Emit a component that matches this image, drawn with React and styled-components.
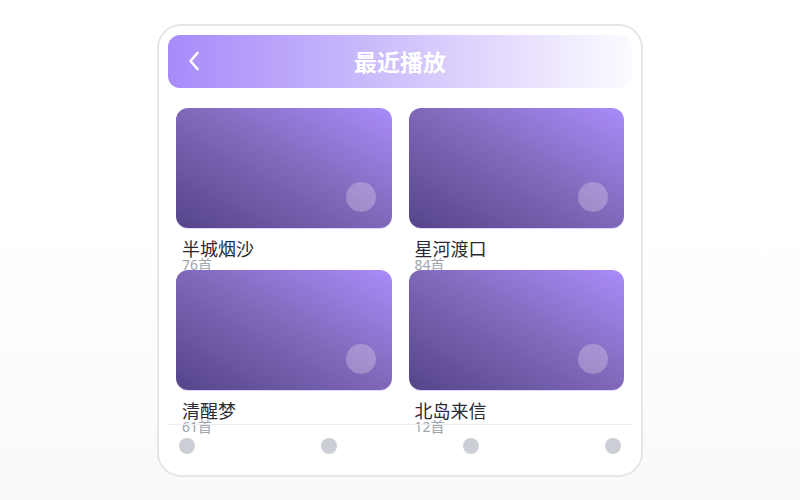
import React from "react";
import styled, { createGlobalStyle } from "styled-components";

const GlobalStyle = createGlobalStyle`
  html, body { margin: 0; padding: 0; }
  body {
    height: 500px;
    background: linear-gradient(to bottom, #ffffff 0%, #ffffff 45%, #f9f9fb 100%);
    font-family: "Noto Sans", "Noto Sans CJK SC", sans-serif;
  }
  #root { height: 100%; }
`;

const Page = styled.div`
  height: 100%;
  display: flex;
  align-items: center;
  justify-content: center;
`;

const Frame = styled.div`
  box-sizing: border-box;
  width: 486px;
  height: 453px;
  border: 2px solid #e6e6ea;
  border-radius: 24px;
  background: #ffffff;
  padding: 9px;
  display: flex;
  flex-direction: column;
`;

const Header = styled.div`
  position: relative;
  flex: 0 0 53px;
  border-radius: 12px;
  background: linear-gradient(90deg, #a78bfa 0%, #cbbcfb 45%, #e7defd 75%, #fcfbff 100%);
  display: flex;
  align-items: center;
  justify-content: center;
`;

const BackButton = styled.button`
  position: absolute;
  left: 18px;
  top: 50%;
  transform: translateY(-50%);
  border: 0;
  background: none;
  padding: 0;
  width: 16px;
  height: 22px;
  display: flex;
  align-items: center;
  justify-content: center;
  cursor: pointer;
`;

const Title = styled.h1`
  margin: 0;
  color: #ffffff;
  font-family: "Noto Sans CJK SC", sans-serif;
  font-size: 23px;
  font-weight: 700;
  line-height: 1;
`;

const Grid = styled.div`
  flex: 1 1 auto;
  min-height: 0;
  padding: 20px 8px 0 8px;
  display: grid;
  grid-template-columns: 1fr 1fr;
  grid-auto-rows: 150px;
  column-gap: 17px;
  row-gap: 12px;
  align-content: start;
`;

const Item = styled.div`
  display: flex;
  flex-direction: column;
  min-height: 0;
`;

const Cover = styled.div`
  position: relative;
  box-sizing: border-box;
  height: 120px;
  flex: 0 0 120px;
  border-radius: 12px;
  background: linear-gradient(to top right, #55448a 0%, #7f68b8 50%, #a98cfa 100%);
  box-shadow: 0 1px 0 rgba(167, 139, 250, 0.35);
`;

const PlayDot = styled.span`
  position: absolute;
  right: 16px;
  bottom: 16px;
  width: 30px;
  height: 30px;
  border-radius: 50%;
  background: rgba(255, 255, 255, 0.25);
`;

const Name = styled.div`
  margin-top: 10px;
  padding-left: 6px;
  font-family: "Noto Sans CJK SC", sans-serif;
  font-size: 18px;
  font-weight: 400;
  line-height: 20px;
  color: #2a2a30;
  white-space: nowrap;
`;

const Count = styled.div`
  padding-left: 6px;
  font-family: "Noto Sans", "Noto Sans CJK SC", sans-serif;
  font-size: 14px;
  font-weight: 400;
  line-height: 13px;
  color: #a0a4ab;
  white-space: nowrap;
`;

const Nav = styled.div`
  flex: 0 0 auto;
  border-top: 1px solid #ececef;
  padding: 13px 11px 12px;
  display: flex;
  justify-content: space-between;
  align-items: center;
`;

const NavDot = styled.span`
  width: 16px;
  height: 16px;
  border-radius: 50%;
  background: #cbced4;
`;

const playlists = [
  { name: "半城烟沙", count: 76 },
  { name: "星河渡口", count: 84 },
  { name: "清醒梦", count: 61 },
  { name: "北岛来信", count: 12 },
];

export default function App() {
  return (
    <>
      <GlobalStyle />
      <Page>
        <Frame>
          <Header>
            <BackButton aria-label="返回">
              <svg width="12" height="20" viewBox="0 0 12 20" fill="none">
                <polyline
                  points="9.5,2 2.5,10 9.5,18"
                  stroke="#ffffff"
                  strokeWidth="2.6"
                  strokeLinecap="round"
                  strokeLinejoin="round"
                />
              </svg>
            </BackButton>
            <Title>最近播放</Title>
          </Header>
          <Grid>
            {playlists.map((p) => (
              <Item key={p.name}>
                <Cover>
                  <PlayDot />
                </Cover>
                <Name>{p.name}</Name>
                <Count>{p.count}首</Count>
              </Item>
            ))}
          </Grid>
          <Nav>
            <NavDot />
            <NavDot />
            <NavDot />
            <NavDot />
          </Nav>
        </Frame>
      </Page>
    </>
  );
}
